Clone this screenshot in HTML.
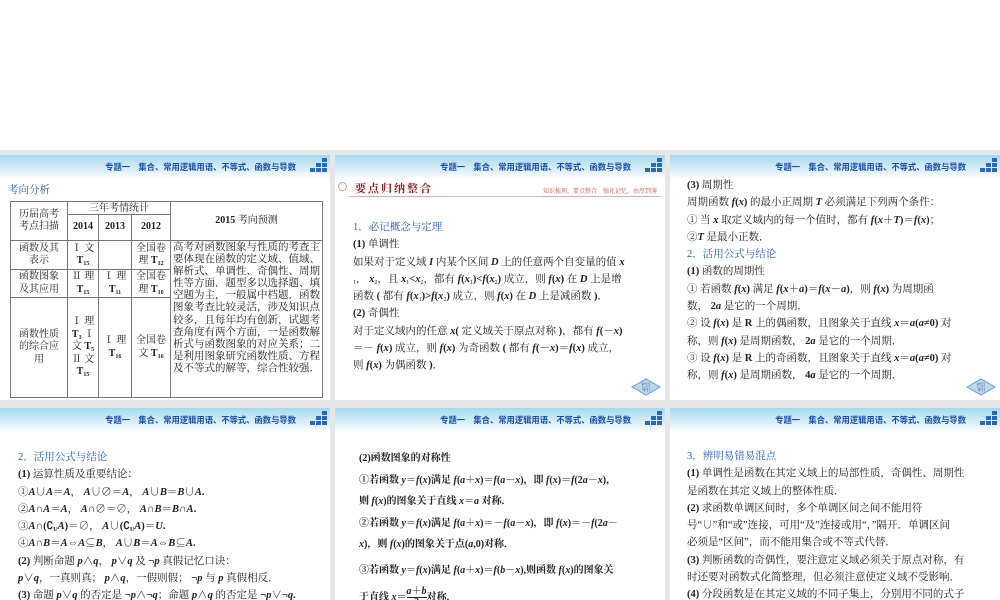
<!DOCTYPE html>
<html><head><meta charset="utf-8">
<style>
*{margin:0;padding:0;box-sizing:border-box}
body{width:1000px;height:600px;overflow:hidden;background:#fff;position:relative;font-family:"Liberation Serif","Noto Serif CJK SC",serif;color:#222}
.bg{position:absolute;left:0;top:150px;width:1000px;height:450px;background:#e6e6e6}
.s{position:absolute;background:#fff;overflow:hidden}
.hd{position:absolute;left:0;top:0;right:0;height:24px;background:linear-gradient(#a9d8ee,#d8eef8 60%,#fff)}
.hd .t{position:absolute;right:34px;top:6px;font:bold 8.3px "Liberation Sans","Noto Sans CJK SC",sans-serif;color:#1a4fa8;white-space:nowrap}
.ic{position:absolute;right:3px;top:3px;width:18px;height:14px}
.ic i{position:absolute;width:5px;height:4px;background:#2a68b8}
.c{position:absolute;font-size:10.5px;line-height:17.3px;white-space:nowrap}
.bl{color:#2a5db0}
b{font-weight:bold}
.nav{position:absolute;right:4px;bottom:4px;width:30px;height:18px}
table{border-collapse:collapse;font-size:10px;line-height:12.5px}
td{border:1px solid #777;text-align:center;vertical-align:middle;padding:0 1px}
sub{font-size:6px;line-height:0;vertical-align:-2px}
</style></head><body>
<div class="bg"></div>

<!-- slide 1 -->
<div class="s" style="left:0;top:155px;width:330px;height:245px">
 <div class="hd"><span class="t">专题一　集合、常用逻辑用语、不等式、函数与导数</span><div class="ic"><i style="left:13px;top:0"></i><i style="left:7px;top:5px"></i><i style="left:13px;top:5px"></i><i style="left:1px;top:10px"></i><i style="left:7px;top:10px"></i><i style="left:13px;top:10px"></i></div></div>
 <div style="position:absolute;left:8px;top:27px;font-size:10.5px;color:#2a5db0">考向分析</div>
 <table style="position:absolute;left:10px;top:46px;width:313px">
  <tr style="height:13px"><td rowspan="2" style="width:57px">历届高考<br>考点扫描</td><td colspan="3" style="line-height:11px">三年考情统计</td><td rowspan="2" style="width:152px"><b>2015</b> 考向预测</td></tr>
  <tr style="height:26px"><td style="width:31px"><b>2014</b></td><td style="width:33px"><b>2013</b></td><td style="width:39px"><b>2012</b></td></tr>
  <tr style="height:29px"><td>函数及其<br>表示</td><td>Ⅰ 文<br><b>T<sub>15</sub></b></td><td></td><td>全国卷<br>理 <b>T<sub>12</sub></b></td>
  <td rowspan="3" style="text-align:left;vertical-align:top;padding:1px 2px;white-space:normal;line-height:12.1px;font-size:10.5px">高考对函数图象与性质的考查主要体现在函数的定义域、值域、解析式、单调性、奇偶性、周期性等方面．题型多以选择题、填空题为主，一般属中档题．函数图象考查比较灵活，涉及知识点较多，且每年均有创新，试题考查角度有两个方面，一是函数解析式与函数图象的对应关系；二是利用图象研究函数性质、方程及不等式的解等，综合性较强．</td></tr>
  <tr style="height:28px"><td>函数图象<br>及其应用</td><td>Ⅱ 理<br><b>T<sub>15</sub></b></td><td>Ⅰ 理<br><b>T<sub>11</sub></b></td><td>全国卷<br>理 <b>T<sub>10</sub></b></td></tr>
  <tr style="height:100px"><td>函数性质<br>的综合应<br>用</td><td>Ⅰ 理<br><b>T<sub>3</sub></b> Ⅰ<br>文 <b>T<sub>5</sub></b><br>Ⅱ 文<br><b>T<sub>15</sub></b></td><td>Ⅰ 理<br><b>T<sub>16</sub></b></td><td>全国卷<br>文 <b>T<sub>16</sub></b></td></tr>
 </table>
</div>

<!-- slide 2 -->
<div class="s" style="left:335px;top:155px;width:330px;height:245px">
 <div class="hd"><span class="t">专题一　集合、常用逻辑用语、不等式、函数与导数</span><div class="ic"><i style="left:13px;top:0"></i><i style="left:7px;top:5px"></i><i style="left:13px;top:5px"></i><i style="left:1px;top:10px"></i><i style="left:7px;top:10px"></i><i style="left:13px;top:10px"></i></div></div>
 <div style="position:absolute;left:3px;top:27px;width:9px;height:9px;border-radius:50%;border:1px solid #c99;background:#fff"></div>
 <div style="position:absolute;left:20px;top:25px;font:bold 11px 'Noto Serif CJK SC',serif;color:#8a1c1c;letter-spacing:2px">要点归纳整合</div>
 <div style="position:absolute;left:14px;top:41px;width:312px;height:1px;background:#d8b0b0"></div>
 <div style="position:absolute;right:8px;top:31px;font-size:6px;color:#b55">知识梳理，要点整合　强化记忆，由厚到薄</div>
 <div class="c" style="left:18px;top:64px">
  <div class="bl">1．必记概念与定理</div>
  <div><b>(1)</b> 单调性</div>
  <div>如果对于定义域 <b><i>I</i></b> 内某个区间 <b><i>D</i></b> 上的任意两个自变量的值 <b><i>x</i></b></div>
  <div><sub>1</sub>， <b><i>x</i></b><sub>2</sub>，且 <b><i>x</i></b><sub>1</sub><b>&lt;<i>x</i></b><sub>2</sub>，都有 <b><i>f</i>(<i>x</i></b><sub>1</sub><b>)&lt;<i>f</i>(<i>x</i></b><sub>2</sub><b>)</b> 成立，则 <b><i>f</i>(<i>x</i>)</b> 在 <b><i>D</i></b> 上是增</div>
  <div>函数 <b>(</b> 都有 <b><i>f</i>(<i>x</i></b><sub>1</sub><b>)&gt;<i>f</i>(<i>x</i></b><sub>2</sub><b>)</b> 成立，则 <b><i>f</i>(<i>x</i>)</b> 在 <b><i>D</i></b> 上是减函数 <b>)</b>．</div>
  <div><b>(2)</b> 奇偶性</div>
  <div>对于定义域内的任意 <b><i>x</i>(</b> 定义域关于原点对称 <b>)</b>，都有 <b><i>f</i>(－<i>x</i>)</b></div>
  <div>＝－ <b><i>f</i>(<i>x</i>)</b> 成立，则 <b><i>f</i>(<i>x</i>)</b> 为奇函数 <b>(</b> 都有 <b><i>f</i>(－<i>x</i>)＝<i>f</i>(<i>x</i>)</b> 成立，</div>
  <div>则 <b><i>f</i>(<i>x</i>)</b> 为偶函数 <b>)</b>．</div>
 </div>
 <svg class="nav" viewBox="0 0 30 18"><polygon points="1,9 15,1 29,9 15,17" fill="#bcd8f4" stroke="#6a9ad0"/><text x="15" y="8" font-size="4" text-anchor="middle" fill="#234">栏目</text><text x="15" y="13" font-size="4" text-anchor="middle" fill="#234">导引</text></svg>
</div>

<!-- slide 3 -->
<div class="s" style="left:670px;top:155px;width:330px;height:245px">
 <div class="hd"><span class="t">专题一　集合、常用逻辑用语、不等式、函数与导数</span><div class="ic"><i style="left:13px;top:0"></i><i style="left:7px;top:5px"></i><i style="left:13px;top:5px"></i><i style="left:1px;top:10px"></i><i style="left:7px;top:10px"></i><i style="left:13px;top:10px"></i></div></div>
 <div class="c" style="left:17px;top:22px">
  <div><b>(3)</b> 周期性</div>
  <div>周期函数 <b><i>f</i>(<i>x</i>)</b> 的最小正周期 <b><i>T</i></b> 必须满足下列两个条件：</div>
  <div>① 当 <b><i>x</i></b> 取定义域内的每一个值时，都有 <b><i>f</i>(<i>x</i>＋<i>T</i>)＝<i>f</i>(<i>x</i>)</b>；</div>
  <div>②<b><i>T</i></b> 是最小正数．</div>
  <div class="bl">2．活用公式与结论</div>
  <div><b>(1)</b> 函数的周期性</div>
  <div>① 若函数 <b><i>f</i>(<i>x</i>)</b> 满足 <b><i>f</i>(<i>x</i>＋<i>a</i>)＝<i>f</i>(<i>x</i>－<i>a</i>)</b>，则 <b><i>f</i>(<i>x</i>)</b> 为周期函</div>
  <div>数， <b>2<i>a</i></b> 是它的一个周期．</div>
  <div>② 设 <b><i>f</i>(<i>x</i>)</b> 是 <b>R</b> 上的偶函数，且图象关于直线 <b><i>x</i>＝<i>a</i>(<i>a</i>≠0)</b> 对</div>
  <div>称，则 <b><i>f</i>(<i>x</i>)</b> 是周期函数， <b>2<i>a</i></b> 是它的一个周期．</div>
  <div>③ 设 <b><i>f</i>(<i>x</i>)</b> 是 <b>R</b> 上的奇函数，且图象关于直线 <b><i>x</i>＝<i>a</i>(<i>a</i>≠0)</b> 对</div>
  <div>称，则 <b><i>f</i>(<i>x</i>)</b> 是周期函数， <b>4<i>a</i></b> 是它的一个周期．</div>
 </div>
 <svg class="nav" viewBox="0 0 30 18"><polygon points="1,9 15,1 29,9 15,17" fill="#bcd8f4" stroke="#6a9ad0"/><text x="15" y="8" font-size="4" text-anchor="middle" fill="#234">栏目</text><text x="15" y="13" font-size="4" text-anchor="middle" fill="#234">导引</text></svg>
</div>

<!-- slide 4 -->
<div class="s" style="left:0;top:408px;width:330px;height:192px">
 <div class="hd"><span class="t">专题一　集合、常用逻辑用语、不等式、函数与导数</span><div class="ic"><i style="left:13px;top:0"></i><i style="left:7px;top:5px"></i><i style="left:13px;top:5px"></i><i style="left:1px;top:10px"></i><i style="left:7px;top:10px"></i><i style="left:13px;top:10px"></i></div></div>
 <div class="c" style="left:18px;top:41px">
  <div class="bl">2．活用公式与结论</div>
  <div><b>(1)</b> 运算性质及重要结论：</div>
  <div>①<b><i>A</i>∪<i>A</i>＝<i>A</i></b>， <b><i>A</i>∪∅＝<i>A</i></b>， <b><i>A</i>∪<i>B</i>＝<i>B</i>∪<i>A</i>.</b></div>
  <div>②<b><i>A</i>∩<i>A</i>＝<i>A</i></b>， <b><i>A</i>∩∅</b>＝∅， <b><i>A</i>∩<i>B</i>＝<i>B</i>∩<i>A</i>.</b></div>
  <div>③<b><i>A</i>∩(∁<sub>U</sub><i>A</i>)</b>＝∅， <b><i>A</i>∪(∁<sub>U</sub><i>A</i>)＝<i>U</i>.</b></div>
  <div>④<b><i>A</i>∩<i>B</i>＝<i>A</i>⇔<i>A</i>⊆<i>B</i></b>， <b><i>A</i>∪<i>B</i>＝<i>A</i>⇔<i>B</i>⊆<i>A</i>.</b></div>
  <div><b>(2)</b> 判断命题 <b><i>p</i>∧<i>q</i></b>， <b><i>p</i>∨<i>q</i></b> 及 <b>¬<i>p</i></b> 真假记忆口诀：</div>
  <div><b><i>p</i>∨<i>q</i></b>，一真则真； <b><i>p</i>∧<i>q</i></b>，一假则假； <b>¬<i>p</i></b> 与 <b><i>p</i></b> 真假相反．</div>
  <div><b>(3)</b> 命题 <b><i>p</i>∨<i>q</i></b> 的否定是 <b>¬<i>p</i>∧¬<i>q</i></b>；命题 <b><i>p</i>∧<i>q</i></b> 的否定是 <b>¬<i>p</i>∨¬<i>q</i>.</b></div>
 </div>
</div>

<!-- slide 5 -->
<div class="s" style="left:335px;top:408px;width:330px;height:192px">
 <div class="hd"><span class="t">专题一　集合、常用逻辑用语、不等式、函数与导数</span><div class="ic"><i style="left:13px;top:0"></i><i style="left:7px;top:5px"></i><i style="left:13px;top:5px"></i><i style="left:1px;top:10px"></i><i style="left:7px;top:10px"></i><i style="left:13px;top:10px"></i></div></div>
 <div class="c" style="left:24px;top:40px;font-weight:bold;font-size:10px;line-height:21.5px">
  <div>(2)函数图象的对称性</div>
  <div>①若函数 <i>y</i>＝<i>f</i>(<i>x</i>)满足 <i>f</i>(<i>a</i>＋<i>x</i>)＝<i>f</i>(<i>a</i>－<i>x</i>)，即 <i>f</i>(<i>x</i>)＝<i>f</i>(2<i>a</i>－<i>x</i>)，</div>
  <div>则 <i>f</i>(<i>x</i>)的图象关于直线 <i>x</i>＝<i>a</i> 对称．</div>
  <div>②若函数 <i>y</i>＝<i>f</i>(<i>x</i>)满足 <i>f</i>(<i>a</i>＋<i>x</i>)＝－<i>f</i>(<i>a</i>－<i>x</i>)，即 <i>f</i>(<i>x</i>)＝－<i>f</i>(2<i>a</i>－</div>
  <div><i>x</i>)，则 <i>f</i>(<i>x</i>)的图象关于点(<i>a</i>,0)对称．</div>
  <div style="margin-top:4px">③若函数 <i>y</i>＝<i>f</i>(<i>x</i>)满足 <i>f</i>(<i>a</i>＋<i>x</i>)＝<i>f</i>(<i>b</i>－<i>x</i>),则函数 <i>f</i>(<i>x</i>)的图象关</div>
  <div style="margin-top:6px">于直线 <i>x</i>＝<span style="display:inline-block;vertical-align:middle;text-align:center;line-height:10px"><i>a</i>＋<i>b</i><br><span style="border-top:1px solid #222;display:block">2</span></span>对称．</div>
 </div>
</div>

<!-- slide 6 -->
<div class="s" style="left:670px;top:408px;width:330px;height:192px">
 <div class="hd"><span class="t">专题一　集合、常用逻辑用语、不等式、函数与导数</span><div class="ic"><i style="left:13px;top:0"></i><i style="left:7px;top:5px"></i><i style="left:13px;top:5px"></i><i style="left:1px;top:10px"></i><i style="left:7px;top:10px"></i><i style="left:13px;top:10px"></i></div></div>
 <div class="c" style="left:17px;top:40px">
  <div class="bl">3．辨明易错易混点</div>
  <div><b>(1)</b> 单调性是函数在其定义域上的局部性质，奇偶性、周期性</div>
  <div>是函数在其定义域上的整体性质．</div>
  <div><b>(2)</b> 求函数单调区间时，多个单调区间之间不能用符</div>
  <div>号“∪”和“或”连接，可用“及”连接或用“，”隔开．单调区间</div>
  <div>必须是“区间”，而不能用集合或不等式代替．</div>
  <div><b>(3)</b> 判断函数的奇偶性，要注意定义域必须关于原点对称，有</div>
  <div>时还要对函数式化简整理，但必须注意使定义域不受影响．</div>
  <div><b>(4)</b> 分段函数是在其定义域的不同子集上，分别用不同的式子</div>
 </div>
</div>
</body></html>
